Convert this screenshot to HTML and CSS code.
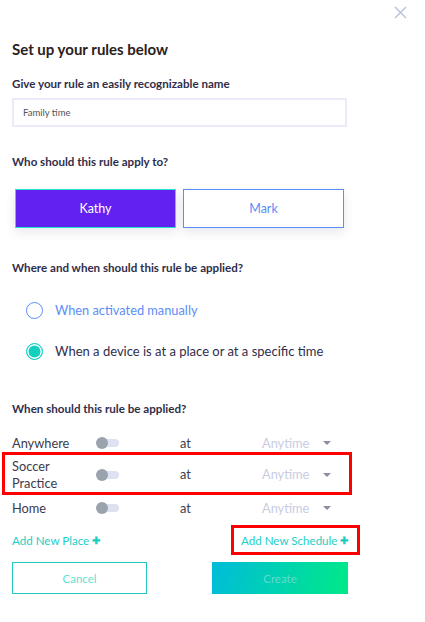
FILE: index.html
```html
<!DOCTYPE html>
<html>
<head>
<meta charset="utf-8">
<link rel="stylesheet" href="styles.css">
</head>
<body>
<div class="modal">
  <div class="topbar">
    <svg class="close" width="13" height="13" viewBox="0 0 13 13"><path d="M1 1L12 12M12 1L1 12" stroke="#b9bedb" stroke-width="1.4" fill="none"/></svg>
  </div>
  <h1 class="title">Set up your rules below</h1>
  <div class="label l1">Give your rule an easily recognizable name</div>
  <div class="input">Family time</div>
  <div class="label l2">Who should this rule apply to?</div>
  <div class="people">
    <div class="person active">Kathy</div>
    <div class="person">Mark</div>
  </div>
  <div class="label l3">Where and when should this rule be applied?</div>
  <div class="radio r1"><span class="circle"></span><span class="rtext blue">When activated manually</span></div>
  <div class="radio r2"><span class="circle on"></span><span class="rtext">When a device is at a place or at a specific time</span></div>
  <div class="label l4">When should this rule be applied?</div>
  <div class="rows">
    <div class="row">
      <span class="place">Anywhere</span><span class="toggle"><i></i></span><span class="at">at</span><span class="any">Anytime</span><span class="caret"></span>
    </div>
    <div class="row hl">
      <span class="place">Soccer<br>Practice</span><span class="toggle"><i></i></span><span class="at">at</span><span class="any">Anytime</span><span class="caret"></span>
    </div>
    <div class="row home">
      <span class="place">Home</span><span class="toggle"><i></i></span><span class="at">at</span><span class="any">Anytime</span><span class="caret"></span>
    </div>
  </div>
  <div class="links">
    <span class="link">Add New Place <b class="plus">✚</b></span>
    <span class="link boxed">Add New Schedule <b class="plus">✚</b></span>
  </div>
  <div class="actions">
    <div class="btn cancel">Cancel</div>
    <div class="btn create">Create</div>
  </div>
</div>
</body>
</html>
```
FILE: styles.css
```css
* { box-sizing: border-box; }
html, body { margin: 0; padding: 0; background: #fff; }
body { font-family: Lato, "Open Sans", sans-serif; color: #2f2e4a; }
.modal { width: 425px; height: 622px; padding: 0 0 0 12px; }
.topbar { height: 24px; display: flex; justify-content: flex-end; align-items: center; padding-right: 18px; }
.close { display: block; }
.title { margin: 15px 0 0; font-size: 15px; line-height: 20px; font-weight: 700; color: #2b2020; }
.label { font-size: 11.6px; line-height: 16px; font-weight: 700; color: #2f2e4a; }
.l1 { margin-top: 17px; }
.input { margin-top: 6px; width: 335px; height: 29px; border: 2px solid #e9ecf8; font-size: 9.5px; color: #555; padding-left: 9px; display: flex; align-items: center; }
.l2 { margin-top: 27px; }
.people { margin: 19px 0 0 3px; display: flex; gap: 7px; }
.person { width: 161px; height: 39px; border: 1px solid #5b8ef6; color: #5b8ef6; font-size: 12.5px; display: flex; align-items: center; justify-content: center; box-shadow: 0 4px 10px rgba(60, 60, 120, 0.12); background: #fff; padding-bottom: 1px; }
.person.active { background: #6221f1; color: #fff; border-color: #1de8c9; }
.l3 { margin-top: 32px; }
.radio { display: flex; align-items: center; height: 20px; margin-left: 14px; }
.r1 { margin-top: 24px; }
.r2 { margin-top: 21px; }
.circle { width: 17px; height: 17px; border-radius: 50%; border: 1.5px solid #5b8ef6; margin-right: 12px; flex: none; }
.circle.on { border-color: #12cfc0; background: #12cfc0; box-shadow: inset 0 0 0 1.5px #fff; }
.rtext { font-size: 13px; color: #2f2e4a; }
.rtext.blue { color: #5b8ef6; font-size: 12.8px; }
.l4 { margin-top: 40px; }
.rows { margin-top: 17px; }
.row { display: grid; grid-template-columns: 84px 84px 82px 61px 10px; align-items: center; height: 18px; font-size: 12.8px; color: #3b3b4c; }
.row.hl { height: 43px; border: 3px solid #ff0000; margin-left: -10px; width: 350px; padding-left: 7px; padding-top: 2px; line-height: 17px; }
.row.home { margin-top: 4px; }
.toggle { position: relative; width: 23px; height: 12px; display: block; }
.toggle::before { content: ""; position: absolute; left: 4px; right: 0; top: 2px; height: 8px; border-radius: 4px; background: #dde1f1; }
.toggle i { position: absolute; left: 0; top: 0; width: 12px; height: 12px; border-radius: 50%; background: #99a2ad; }
.at { color: #3b3b4c; }
.any { color: #c9cce2; }
.caret { width: 0; height: 0; border-left: 4px solid transparent; border-right: 4px solid transparent; border-top: 4px solid #8a8e9e; }
.links { margin-top: 8px; display: flex; align-items: center; height: 30px; }
.link { font-size: 11.6px; color: #1ccfc6; display: flex; align-items: center; }
.link:first-child { width: 219px; }
.plus { font-size: 10px; margin-left: 3px; font-weight: 900; }
.boxed { border: 3px solid #ff0000; height: 30px; width: 129px; padding-left: 7px; }
.actions { margin-top: 7px; display: flex; justify-content: space-between; width: 336px; }
.btn { height: 32px; display: flex; align-items: center; justify-content: center; font-size: 11.5px; }
.cancel { width: 135px; border: 1.5px solid #1fc9bf; color: #5fe0d6; }
.create { width: 136px; background: linear-gradient(105deg, #00bcd9 0%, #00e988 100%); color: #5fdccf; }
```
